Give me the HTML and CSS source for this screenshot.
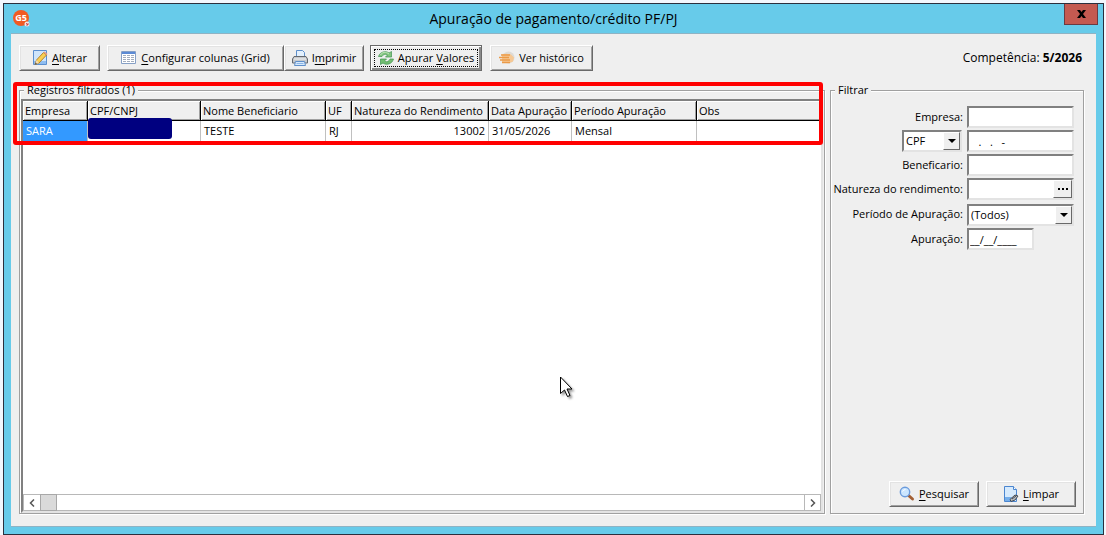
FILE: index.html
```html
<!DOCTYPE html>
<html lang="pt-BR">
  <head>
    <meta charset="UTF-8" />
    <meta name="viewport" content="width=device-width, initial-scale=1.0" />
    <title>Apuração de pagamento/crédito PF/PJ</title>
    <link rel="stylesheet" href="styles.css">
  </head>
  <body>
    <div class="window">
      <header class="titlebar">
        <svg class="app-icon" width="18" height="18" viewBox="0 0 18 18">
          <circle cx="8" cy="8" r="8" fill="#f15a22" />
          <text x="8" y="11" text-anchor="middle" class="app-icon-text">G5</text>
          <circle cx="14" cy="14" r="2.5" fill="#f4e6e6" />
          <path d="M13 13l2 2M15 13v2h-2" stroke="#c33" stroke-width=".8" fill="none" />
        </svg>
        <h1 class="title">Apuração de pagamento/crédito PF/PJ</h1>
        <button type="button" class="close-btn" aria-label="Fechar">
          <svg width="9" height="8" viewBox="0 0 9 8">
            <path d="M0 0h3l1.500 2L6 0h3L6 4l3 4H6L4.500 6 3 8H0l3-4z" fill="#000" />
          </svg>
        </button>
      </header>

      <main class="content">
        <!-- Barra de ferramentas -->
        <div class="toolbar">
          <button type="button" class="btn btn-alterar">
            <svg width="16" height="16" viewBox="0 0 16 16">
              <path d="M1.500.5h13v14h-13z" fill="#cfe5fb" stroke="#5b8fd0" />
              <path d="M2 11h12v3H2z" fill="#8fbdf0" />
              <path d="M11.500 2.500l3 2.500-7.500 8-4 1.500L4.500 10z" fill="#f8cf55" stroke="#b07a1e" stroke-width=".9" />
              <path d="M4.500 10L7 13l-4 1.500z" fill="#f3dcb4" />
              <path d="M3 14.500l.7-1.900 1.200 1.300z" fill="#333" />
              <path d="M11.500 2.500l1.200-1 2.800 2.500-1 1.200z" fill="#e79b86" />
            </svg>
            <span><u>A</u>lterar</span>
          </button>
          <button type="button" class="btn btn-colunas">
            <svg width="16" height="16" viewBox="0 0 16 16">
              <path d="M.5 1.500h14v12H.5z" fill="#fff" stroke="#86a0c6" />
              <path d="M1 2h13v2H1z" fill="#5b8ad5" />
              <path d="M2 5.500h3M6 5.500h3M10 5.500h3M2 7.500h3M6 7.500h3M10 7.500h3M2 9.500h3M6 9.500h3M10 9.500h3M2 11.500h3M6 11.500h3M10 11.500h3" stroke="#a3adbd" />
            </svg>
            <span><u>C</u>onfigurar colunas (Grid)</span>
          </button>
          <button type="button" class="btn btn-imprimir">
            <svg width="16" height="16" viewBox="0 0 16 16">
              <path d="M4.500 7V.5h6l2 2V7z" fill="#e3f0fd" stroke="#5f8fca" />
              <path d="M2 6.500h12l1.500 2.500v4h-15V9z" fill="#c6c9cd" stroke="#65696f" />
              <path d="M2 9h12" stroke="#f5f5f5" />
              <path d="M3.500 11.500h9l1 4h-11z" fill="#d7e9fb" stroke="#5f8fca" />
              <path d="M4.500 13.500h7" stroke="#8bb6e8" />
            </svg>
            <span>I<u>m</u>primir</span>
          </button>
          <button type="button" class="btn btn-apurar">
            <svg width="16" height="16" viewBox="0 0 16 16">
              <path d="M.5 6.500C2 1.500 8 .5 11 3l2.500-1.500V7H7.500L9.500 5C7.500 3.500 5 4.500 4 6.500z" fill="#82c47f" stroke="#3f9350" stroke-width=".7" />
              <path d="M15.500 9C14 14.500 8 15.500 5 13l-2.500 1.500V9h6l-2 2c2 1.500 4.500.5 5.500-2z" fill="#72bd70" stroke="#3f9350" stroke-width=".7" />
              <path d="M2.500 5C4 2 8 1.500 11 4" stroke="#c1e6b9" fill="none" />
            </svg>
            <span>Apurar <u>V</u>alores</span>
          </button>
          <button type="button" class="btn btn-historico">
            <svg width="16" height="16" viewBox="0 0 16 16">
              <circle cx="9.500" cy="7.500" r="6" fill="#dedbd6" />
              <path d="M3 4.500q4-1.500 9 0l3 3-1 4q-5 2.500-11 1z" fill="#f6c894" />
              <path d="M2 5h9M0 7.500h10M1 10h10M3 12.500h8" stroke="#eb9a48" stroke-width="1.400" />
            </svg>
            <span>Ver histórico</span>
          </button>
          <p class="competencia">Competência: <strong>5/2026</strong></p>
        </div>

        <div class="panels">
          <!-- Registros -->
          <fieldset class="group records">
            <legend>Registros filtrados (1)</legend>
            <div class="grid">
              <table>
                <colgroup>
                  <col class="col-empresa">
                  <col class="col-cpf">
                  <col class="col-nome">
                  <col class="col-uf">
                  <col class="col-natureza">
                  <col class="col-data">
                  <col class="col-periodo">
                  <col>
                </colgroup>
                <thead>
                  <tr>
                    <th>Empresa</th>
                    <th>CPF/CNPJ</th>
                    <th>Nome Beneficiario</th>
                    <th>UF</th>
                    <th>Natureza do Rendimento</th>
                    <th>Data Apuração</th>
                    <th>Período Apuração</th>
                    <th>Obs</th>
                  </tr>
                </thead>
                <tbody>
                  <tr>
                    <td class="selected">SARA</td>
                    <td class="masked"><span class="mask"></span></td>
                    <td>TESTE</td>
                    <td>RJ</td>
                    <td class="number">13002</td>
                    <td>31/05/2026</td>
                    <td>Mensal</td>
                    <td></td>
                  </tr>
                </tbody>
              </table>
              <div class="scrollbar">
                <button type="button" class="scroll-btn" aria-label="Rolar para a esquerda">
                  <svg width="6" height="8" viewBox="0 0 6 8"><path d="M5 .5L1.500 4 5 7.500" /></svg>
                </button>
                <div class="scroll-thumb"></div>
                <button type="button" class="scroll-btn scroll-right" aria-label="Rolar para a direita">
                  <svg width="6" height="8" viewBox="0 0 6 8"><path d="M1 .5L4.500 4 1 7.500" /></svg>
                </button>
              </div>
            </div>
            <div class="highlight"></div>
            <svg class="cursor" width="18" height="26" viewBox="0 0 18 26">
              <path d="M1.500 1v16.500l4-3.500 3 6.500 2.500-1-3-6.500h5z" fill="#fff" stroke="#000" />
            </svg>
          </fieldset>

          <!-- Filtro -->
          <fieldset class="group filter">
            <legend>Filtrar</legend>
            <form class="filter-form">
              <div class="fields">
                <label for="empresa">Empresa:</label>
                <input type="text" id="empresa" class="field" />

                <span class="combo combo-doc">
                  <select id="tipo" aria-label="Tipo de documento">
                    <option>CPF</option>
                    <option>CNPJ</option>
                  </select>
                  <span class="arrow"></span>
                </span>
                <input type="text" class="field" aria-label="Documento" value="   .   .   -" />

                <label for="beneficiario">Beneficario:</label>
                <input type="text" id="beneficiario" class="field" />

                <label for="natureza">Natureza do rendimento:</label>
                <span class="combo">
                  <input type="text" id="natureza" />
                  <button type="button" class="more" aria-label="Procurar">
                    <svg width="10" height="2" viewBox="0 0 10 2"><path d="M0 0h2v2H0zM4 0h2v2H4zM8 0h2v2H8z" /></svg>
                  </button>
                </span>

                <label for="periodo">Período de Apuração:</label>
                <span class="combo">
                  <select id="periodo">
                    <option>(Todos)</option>
                    <option>Mensal</option>
                  </select>
                  <span class="arrow"></span>
                </span>

                <label for="apuracao">Apuração:</label>
                <input type="text" id="apuracao" class="field field-date" value="__/__/____" />
              </div>

              <div class="actions">
                <button type="button" class="btn">
                  <svg width="16" height="16" viewBox="0 0 16 16">
                    <path d="M9 9l4.500 4" stroke="#a35f33" stroke-width="3" stroke-linecap="round" />
                    <circle cx="6" cy="6" r="4.700" fill="#cbe6ff" stroke="#6b9bdc" stroke-width="1.400" />
                    <path d="M3.500 5.500q1-2 3-2" stroke="#fff" fill="none" />
                  </svg>
                  <span><u>P</u>esquisar</span>
                </button>
                <button type="button" class="btn">
                  <svg width="16" height="16" viewBox="0 0 16 16">
                    <path d="M1.500.5h9l3 3v12h-12z" fill="#d6eafd" stroke="#4b86d0" />
                    <path d="M10.500.5v3h3" fill="#fff" stroke="#4b86d0" />
                    <path d="M2 11h7l-2 4H2z" fill="#75aeea" />
                    <path d="M7 13.500l5-4.500 3 1-3 4-4 1.500z" fill="#b9bdc2" stroke="#444b54" />
                    <path d="M9 13l4-3" stroke="#444b54" />
                  </svg>
                  <span><u>L</u>impar</span>
                </button>
              </div>
            </form>
          </fieldset>
        </div>
      </main>
    </div>
  </body>
</html>
```
FILE: styles.css
```css
* {
  box-sizing: border-box;
}

body {
  display: flex;
  min-height: 100vh;
  margin: 0;
  padding: 3px 2px 0 3px;
  background-color: #f3f7fd;
  font-family: "Open Sans", "Noto Sans", sans-serif;
  font-size: 11px;
  line-height: 16px;
  color: #000;
}

button,
input,
select {
  font: inherit;
  color: inherit;
}

u {
  text-underline-offset: 2px;
}

/* Janela */
.window {
  flex: 1;
  display: flex;
  flex-direction: column;
  border: 1px solid #2b2f3d;
  padding: 0 7px 7px;
  background-color: #67cbea;
}

.titlebar {
  display: flex;
  align-items: center;
  height: 29px;
}

.app-icon {
  margin-left: 2px;
}

.app-icon-text {
  font-size: 9px;
  font-weight: bold;
  fill: #fff;
}

.title {
  flex: 1;
  margin: 0;
  padding-left: 12px;
  text-align: center;
  font-size: 14px;
  font-weight: normal;
}

.close-btn {
  display: flex;
  align-items: center;
  justify-content: center;
  align-self: flex-start;
  width: 34px;
  height: 21px;
  margin-right: -2px;
  padding: 0;
  border: 1px solid #6b3a42;
  border-top: none;
  background-color: #c45a51;
}

.content {
  flex: 1;
  display: flex;
  flex-direction: column;
  border: 1px solid #8fb3c4;
  border-width: 1px 0;
  padding: 11px 12px 12px 8px;
  background-color: #efefef;
}

/* Botões */
.btn {
  display: flex;
  align-items: center;
  justify-content: center;
  gap: 4px;
  height: 26px;
  padding: 0;
  border: 1px solid;
  border-color: #fff #696969 #696969 #fff;
  background-color: #efefef;
  box-shadow: inset 1px 1px 0 #e3e3e3, inset -1px -1px 0 #a0a0a0;
  white-space: nowrap;
}

.toolbar {
  display: flex;
  align-items: center;
}

.btn-alterar {
  width: 81px;
  margin-right: 7px;
}

.btn-colunas {
  width: 177px;
}

.btn-imprimir {
  width: 80px;
  margin-right: 6px;
}

.btn-apurar {
  width: 112px;
  margin-right: 8px;
  border-color: #696969;
  outline: 1px dotted #000;
  outline-offset: -5px;
  box-shadow: inset 1px 1px 0 #fff, inset -2px -2px 0 #8a8a8a;
}

.btn-historico {
  width: 103px;
}

.competencia {
  margin: 0 2px 0 auto;
  font-size: 12px;
}

/* Painéis */
.panels {
  flex: 1;
  display: grid;
  grid-template-columns: 1fr 254px;
  gap: 5px;
  margin-top: 12px;
}

.group {
  position: relative;
  display: flex;
  flex-direction: column;
  min-width: 0;
  margin: 0;
  padding: 0;
  border: 1px solid #a0a0a0;
  box-shadow: 1px 1px 0 #fff, inset 1px 1px 0 #fff;
}

.group legend {
  margin-left: 4px;
  padding: 0 3px;
  background-color: #efefef;
  line-height: 14px;
}

.grid {
  flex: 1;
  display: flex;
  flex-direction: column;
  margin: 2px 1px 0;
  border: 2px solid;
  border-color: #808080 #e3e3e3 #e3e3e3 #808080;
  background-color: #fff;
}

table {
  width: 100%;
  table-layout: fixed;
  border-collapse: separate;
  border-spacing: 0;
}

.col-empresa { width: 65px; }
.col-cpf { width: 113px; }
.col-nome { width: 125px; }
.col-uf { width: 26px; }
.col-natureza { width: 137px; }
.col-data { width: 83px; }
.col-periodo { width: 125px; }

th,
td {
  height: 20px;
  padding: 0 2px;
  text-align: left;
  font-weight: normal;
  white-space: nowrap;
}

th {
  border-right: 1px solid #000;
  border-bottom: 1px solid #000;
  background-color: #efefef;
  box-shadow: inset 1px 1px 0 #fff, inset -1px -1px 0 #a0a0a0;
}

td {
  padding: 0 3px;
  border-right: 1px solid #c0c0c0;
}

th:last-child,
td:last-child {
  border-right: none;
}

.number {
  text-align: right;
}

.selected {
  background-color: #3399ff;
  color: #fff;
}

.masked {
  position: relative;
}

.mask {
  position: absolute;
  top: -3px;
  left: 0;
  width: 84px;
  height: 21px;
  border-radius: 3px;
  background-color: #000080;
}

.scrollbar {
  display: flex;
  height: 17px;
  margin-top: auto;
  border: 1px solid #b8b8b8;
}

.scroll-btn {
  display: flex;
  align-items: center;
  justify-content: center;
  width: 16px;
  padding: 0;
  border: none;
  background-color: #fff;
}

.scroll-btn path {
  fill: none;
  stroke: #555;
  stroke-width: 1.5;
}

.scroll-thumb {
  width: 17px;
  margin: -1px 0;
  border: 1px solid #a8a8a8;
  background-color: #dadada;
}

.scroll-right {
  margin-left: auto;
  border-left: 1px solid #b8b8b8;
}

/* Destaque da linha e ponteiro */
.highlight {
  position: absolute;
  top: -15px;
  left: -7px;
  right: 1px;
  height: 63px;
  border: 4px solid #ff0000;
  border-radius: 3px;
}

.cursor {
  position: absolute;
  top: 279px;
  left: 539px;
  filter: drop-shadow(2px 2px 1px rgba(0, 0, 0, 0.4));
}

/* Filtro */
.filter-form {
  flex: 1;
  display: flex;
  flex-direction: column;
  justify-content: space-between;
  padding: 9px 9px 6px 0;
}

.fields {
  display: grid;
  grid-template-columns: 1fr 107px;
  grid-template-rows: repeat(4, 22px) 24px 22px;
  align-items: center;
  gap: 2px 4px;
}

.fields label {
  text-align: right;
  white-space: nowrap;
}

.field,
.combo {
  width: 100%;
  height: 22px;
  border: 2px solid;
  border-color: #808080 #e3e3e3 #e3e3e3 #808080;
  background-color: #fff;
}

.field {
  padding: 0 1px;
}

.field-date {
  width: 67px;
}

.combo {
  display: flex;
  align-self: end;
}

.combo input,
.combo select {
  flex: 1;
  min-width: 0;
  padding: 0 2px;
  border: none;
  background: none;
  appearance: none;
}

.combo-doc {
  justify-self: end;
  width: 60px;
  margin-right: 1px;
}

.arrow,
.more {
  display: flex;
  align-items: center;
  justify-content: center;
  width: 17px;
  padding: 0;
  border: 1px solid;
  border-color: #fff #696969 #696969 #fff;
  background-color: #efefef;
}

.more {
  width: 19px;
}

.arrow {
  pointer-events: none;
}

.arrow::after {
  content: "";
  border: 4px solid transparent;
  border-top-color: #000;
  border-bottom: none;
}

.actions {
  display: flex;
  justify-content: flex-end;
  gap: 7px;
  margin-right: -2px;
}

.actions .btn {
  width: 90px;
}
```
